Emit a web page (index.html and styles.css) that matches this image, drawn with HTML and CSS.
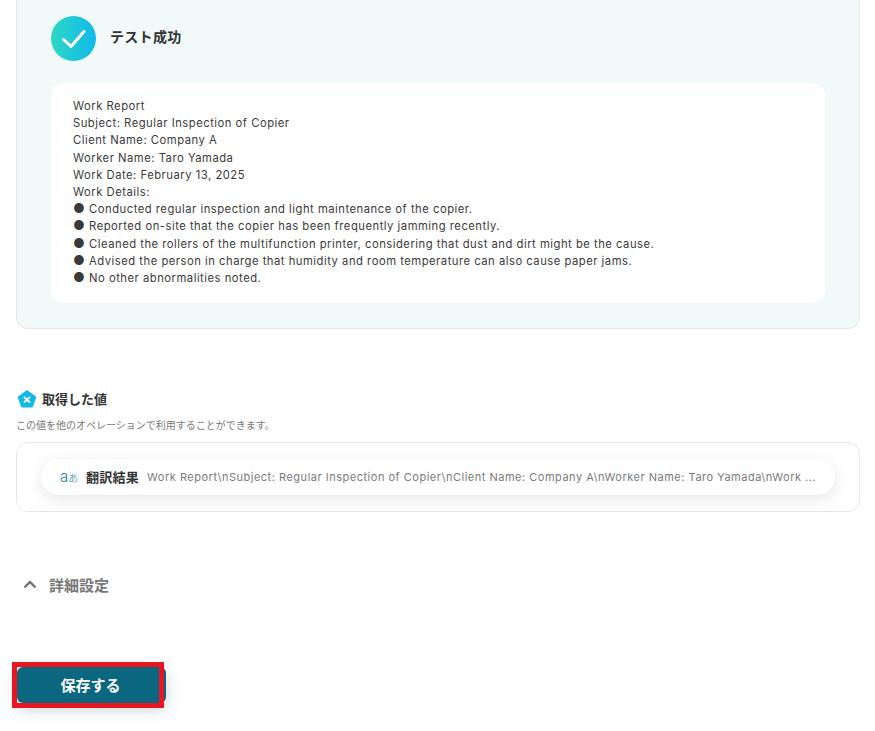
FILE: index.html
```html
<!DOCTYPE html>
<html lang="ja">

<head>
    <meta charset="UTF-8">
    <meta name="viewport" content="width=device-width, initial-scale=1.0">
    <title>テスト成功</title>
    <link rel="stylesheet" href="styles.css">
</head>

<body>
    <section class="result-panel">
        <div class="result-head">
            <span class="check-icon">
                <svg width="26" height="26" viewBox="0 0 26 26">
                    <path d="M2.5 13.5 L10 20.5 L23 5.5" fill="none" stroke="#fff" stroke-width="3" stroke-linecap="round" stroke-linejoin="round" />
                </svg>
            </span>
            <h2>テスト成功</h2>
        </div>
        <div class="result-body">
            <p>Work Report</p>
            <p>Subject: Regular Inspection of Copier</p>
            <p>Client Name: Company A</p>
            <p>Worker Name: Taro Yamada</p>
            <p>Work Date: February 13, 2025</p>
            <p>Work Details:</p>
            <p><span class="dot">●</span> Conducted regular inspection and light maintenance of the copier.</p>
            <p><span class="dot">●</span> Reported on-site that the copier has been frequently jamming recently.</p>
            <p><span class="dot">●</span> Cleaned the rollers of the multifunction printer, considering that dust and dirt might be the cause.</p>
            <p><span class="dot">●</span> Advised the person in charge that humidity and room temperature can also cause paper jams.</p>
            <p><span class="dot">●</span> No other abnormalities noted.</p>
        </div>
    </section>

    <section class="values">
        <div class="values-title">
            <svg width="20" height="20" viewBox="0 0 20 20">
                <path d="M10 1 L18.6 7.2 a1.5 1.5 0 0 1 .5 1.6 L16 17.6 a1.5 1.5 0 0 1 -1.4 1 H5.4 a1.5 1.5 0 0 1 -1.4 -1 L.9 8.8 a1.5 1.5 0 0 1 .5 -1.6 Z" fill="#12b9e6" />
                <path d="M7.5 8.4 L12.5 13 M12.5 8.4 L7.5 13" stroke="#fff" stroke-width="1.8" stroke-linecap="round" />
            </svg>
            <h3>取得した値</h3>
        </div>
        <p class="values-note">この値を他のオペレーションで利用することができます。</p>
        <div class="values-box">
            <div class="value-pill">
                <span class="lang-icon">
                    <span class="lang-a">a</span><span class="lang-b">あ</span>
                </span>
                <span class="value-name">翻訳結果</span>
                <span class="value-text">Work Report\nSubject: Regular Inspection of Copier\nClient Name: Company A\nWorker Name: Taro Yamada\nWork ...</span>
            </div>
        </div>
    </section>

    <div class="advanced">
        <svg width="14" height="9" viewBox="0 0 14 9">
            <path d="M1.5 7.5 L7 2 L12.5 7.5" fill="none" stroke="#737373" stroke-width="2.4" />
        </svg>
        <span>詳細設定</span>
    </div>

    <div class="save-wrap">
        <button class="save-btn">保存する</button>
        <div class="save-frame"></div>
    </div>
</body>

</html>
```

FILE: styles.css
```css
* {
    box-sizing: border-box;
}

html, body {
    height: 731px;
    overflow: hidden;
}

body {
    margin: 0;
    padding: 0 15px 0 16px;
    background-color: #fff;
    font-family: Inter, "Noto Sans CJK JP", sans-serif;
    color: #333;
}

h2, h3, p {
    margin: 0;
}

.result-panel {
    height: 329px;
    padding: 16px 34px 25px;
    background-color: #f1faf9;
    border: 1px solid #e4e8ea;
    border-top: none;
    border-radius: 0 0 12px 12px;
}

.result-head {
    display: flex;
    align-items: center;
    gap: 14px;
    height: 45px;
}

.check-icon {
    display: flex;
    align-items: center;
    justify-content: center;
    width: 45px;
    height: 45px;
    border-radius: 50%;
    background: linear-gradient(90deg, #2dd8c4, #10b9ea);
}

.result-head h2 {
    margin-bottom: 5px;
    font-size: 14px;
    font-weight: 700;
    letter-spacing: 0.3px;
}

.result-body {
    height: 220px;
    margin-top: 22px;
    padding: 15px 22px;
    background-color: #fff;
    border-radius: 12px;
    font-size: 11.25px;
    line-height: 17.2px;
    letter-spacing: 0.5px;
    color: #3a3a3a;
}

.dot {
    font-size: 13px;
    line-height: 1;
}

.values {
    margin-top: 60px;
}

.values-title {
    display: flex;
    align-items: center;
    gap: 5px;
    height: 20px;
    padding-left: 1px;
}

.values-title h3 {
    margin-bottom: 2px;
    font-size: 13px;
    font-weight: 700;
}

.values-note {
    margin-top: 9px;
    font-size: 10px;
    line-height: 14px;
    color: #777;
}

.values-box {
    height: 70px;
    margin-top: 10px;
    padding: 16px 24px;
    border: 1px solid #e6e6e6;
    border-radius: 12px;
}

.value-pill {
    display: flex;
    align-items: center;
    height: 36px;
    padding: 0 19px;
    background-color: #fff;
    border-radius: 18px;
    box-shadow: 0 4px 16px rgba(0, 0, 0, 0.1);
    white-space: nowrap;
}

.lang-icon {
    display: flex;
    align-items: baseline;
    width: 17px;
    margin-right: 9px;
    color: #1f7f9c;
}

.lang-a {
    font-size: 15px;
    font-weight: 300;
    line-height: 14px;
}

.lang-b {
    font-size: 10px;
    font-weight: 300;
}

.value-name {
    margin-bottom: 2px;
    margin-right: 8px;
    font-size: 13px;
    font-weight: 700;
    letter-spacing: 0.25px;
}

.value-text {
    font-size: 11px;
    letter-spacing: 0.51px;
    color: #7a7a7a;
}

.advanced {
    display: flex;
    align-items: center;
    gap: 12px;
    margin-top: 62px;
    padding-left: 7px;
    height: 20px;
    font-size: 15px;
    font-weight: 700;
    color: #777;
}

.save-wrap {
    position: relative;
    margin-top: 73px;
    margin-left: 1px;
    width: 149px;
    height: 36px;
}

.save-btn {
    display: block;
    width: 149px;
    height: 36px;
    padding: 0 2px 2px 0;
    border: none;
    border-radius: 6px;
    background-color: #0b6680;
    box-shadow: 0 6px 16px rgba(10, 50, 80, 0.22);
    color: #fff;
    font-family: inherit;
    font-size: 15px;
    font-weight: 700;
}

.save-frame {
    position: absolute;
    top: -5px;
    left: -5px;
    width: 152px;
    height: 46px;
    border: 5px solid #e8171f;
}
```
